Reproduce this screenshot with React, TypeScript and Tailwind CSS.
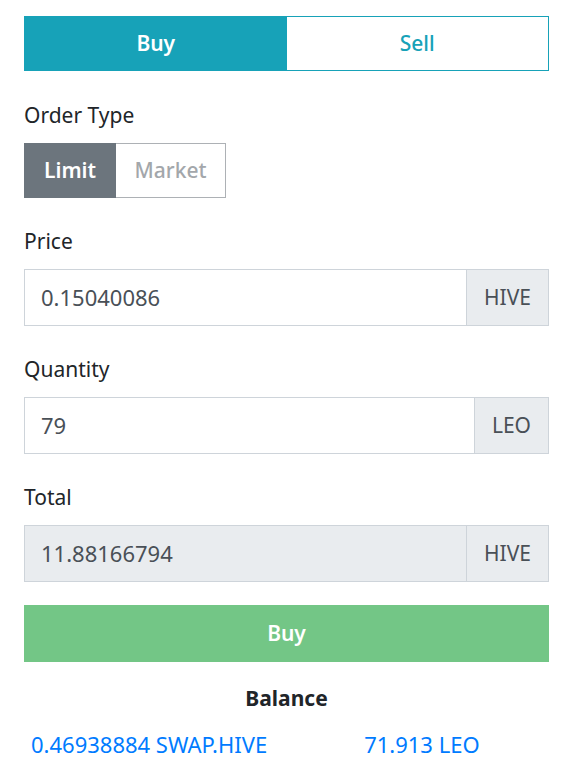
import React from "react";

const font = { fontFamily: '"Noto Sans", "Open Sans", sans-serif' };

function Field({ label, value, unit, readOnly }: { label: string; value: string; unit: string; readOnly?: boolean }) {
  return (
    <div className="mt-[28px]">
      <div className="text-[21px] leading-[30px] text-[#212529]">{label}</div>
      <div className="mt-[13px] flex h-[57px]">
        <div
          className={`flex flex-1 items-center border border-[#ced4da] pl-[16px] text-[22px] text-[#495057] ${
            readOnly ? "bg-[#e9ecef]" : "bg-white"
          }`}
        >
          {value}
        </div>
        <div className="flex items-center border border-l-0 border-[#ced4da] bg-[#e9ecef] px-[17px] text-[21px] text-[#495057]">
          {unit}
        </div>
      </div>
    </div>
  );
}

export default function App() {
  return (
    <div className="min-h-[781px] bg-white pl-[24px] pr-[26px] pt-[16px]" style={font}>
      <div className="flex h-[55px] border border-[#17a2b8]">
        <div className="flex flex-1 items-center justify-center bg-[#17a2b8] text-[21px] font-semibold text-white">Buy</div>
        <div className="flex flex-1 items-center justify-center bg-white text-[21px] font-medium text-[#17a2b8]">Sell</div>
      </div>

      <div className="mt-[29px] text-[21px] leading-[30px] text-[#212529]">Order Type</div>
      <div className="mt-[13px] flex h-[55px] w-[202px]">
        <div className="flex w-[92px] items-center justify-center bg-[#6c757d] text-[21px] font-semibold text-white">Limit</div>
        <div className="flex flex-1 items-center justify-center border border-l-0 border-[#adb1b5] text-[21px] font-medium text-[#a3a7ab]">
          Market
        </div>
      </div>

      <Field label="Price" value="0.15040086" unit="HIVE" />
      <Field label="Quantity" value="79" unit="LEO" />
      <Field label="Total" value="11.88166794" unit="HIVE" readOnly />

      <button className="mt-[23px] flex h-[57px] w-full items-center justify-center bg-[#73c686] text-[21px] font-semibold text-white">
        Buy
      </button>

      <div className="mt-[21px] text-center text-[21px] leading-[30px] font-bold text-[#212529]">Balance</div>
      <div className="mt-[16px] flex text-[22px] leading-[30px] text-[#007bff]">
        <a className="ml-[7px]">0.46938884 SWAP.HIVE</a>
        <a className="ml-[97px]">71.913 LEO</a>
      </div>
    </div>
  );
}
